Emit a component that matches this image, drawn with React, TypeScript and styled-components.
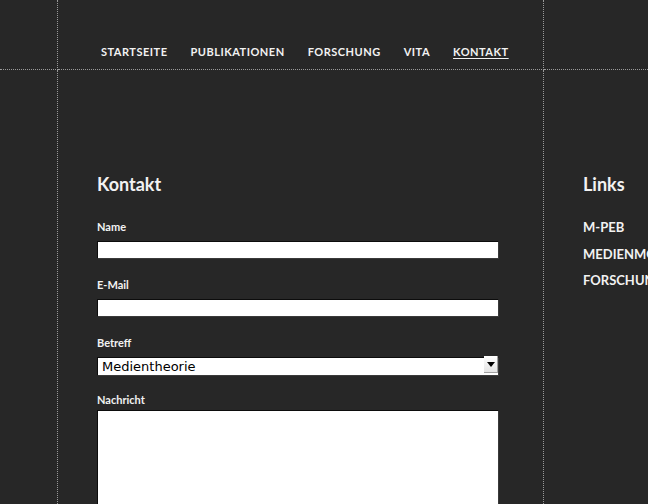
import React from "react";
import styled, { createGlobalStyle } from "styled-components";

const GlobalStyle = createGlobalStyle`
  html, body {
    margin: 0;
    padding: 0;
    background: #272727;
    overflow: hidden;
  }
  body {
    font-family: Lato, "DejaVu Sans", Verdana, sans-serif;
    color: #f2f2f2;
  }
`;

const navItems = ["Startseite", "Publikationen", "Forschung", "Vita", "Kontakt"];
const links = ["M-PEB", "Medienmonitoring", "Forschungsnetz"];

const App = () => {
  return (
    <>
      <GlobalStyle />
      <Shell>
        <TopCell $rule />
        <TopCell $rule>
          <Nav>
            {navItems.map((item) => (
              <NavLink key={item} href="#" $active={item === "Kontakt"}>
                {item}
              </NavLink>
            ))}
          </Nav>
        </TopCell>
        <TopCell />

        <BodyCell $rule />
        <BodyCell $rule>
          <Main>
            <Heading>Kontakt</Heading>
            <Form>
              <Field>
                <Label>Name</Label>
                <TextInput type="text" />
              </Field>
              <Field>
                <Label>E-Mail</Label>
                <TextInput type="text" />
              </Field>
              <Field $gap={5}>
                <Label>Betreff</Label>
                <SelectWrap>
                  <Select defaultValue="Medientheorie">
                    <option>Medientheorie</option>
                    <option>Publikationen</option>
                    <option>Forschung</option>
                  </Select>
                  <SelectArrow>
                    <svg width="8" height="5" viewBox="0 0 8 5">
                      <path d="M0 0h8L4 5z" fill="#000" />
                    </svg>
                  </SelectArrow>
                </SelectWrap>
              </Field>
              <Field $gap={3}>
                <Label>Nachricht</Label>
                <Message />
              </Field>
            </Form>
          </Main>
        </BodyCell>
        <BodyCell>
          <Sidebar>
            <Heading>Links</Heading>
            <LinkList>
              {links.map((l) => (
                <li key={l}>
                  <SideLink href="#">{l}</SideLink>
                </li>
              ))}
            </LinkList>
          </Sidebar>
        </BodyCell>
      </Shell>
    </>
  );
};

const Shell = styled.div`
  display: grid;
  grid-template-columns: 58px 486px 1fr;
  grid-template-rows: 70px 1fr;
  height: 100vh;
  width: 100vw;
  overflow: hidden;
`;

const TopCell = styled.div<{ $rule?: boolean }>`
  box-sizing: border-box;
  border-bottom: 1px dotted #9a9a9a;
  border-right: ${({ $rule }) => ($rule ? "1px dotted #9a9a9a" : "none")};
  min-width: 0;
`;

const BodyCell = styled.div<{ $rule?: boolean }>`
  box-sizing: border-box;
  border-right: ${({ $rule }) => ($rule ? "1px dotted #9a9a9a" : "none")};
  min-width: 0;
  overflow: hidden;
`;

const Nav = styled.nav`
  display: flex;
  gap: 23px;
  padding: 45px 0 0 43px;
`;

const NavLink = styled.a<{ $active?: boolean }>`
  font-size: 11px;
  line-height: 14px;
  font-weight: bold;
  letter-spacing: 0.5px;
  text-transform: uppercase;
  color: #f2f2f2;
  text-decoration: ${({ $active }) => ($active ? "underline" : "none")};
  text-underline-offset: 2px;
  white-space: nowrap;
`;

const Main = styled.div`
  padding: 103px 0 0 39px;
`;

const Heading = styled.h2`
  margin: 0;
  font-size: 18px;
  line-height: 22px;
  font-weight: bold;
  color: #f2f2f2;
`;

const Form = styled.form`
  display: flex;
  flex-direction: column;
  gap: 19px;
  margin-top: 25px;
  width: 402px;
`;

const Field = styled.div<{ $gap?: number }>`
  display: flex;
  flex-direction: column;
  gap: ${({ $gap = 7 }) => `${$gap}px`};
`;

const Label = styled.label`
  font-size: 11px;
  line-height: 14px;
  font-weight: bold;
  color: #f2f2f2;
`;

const TextInput = styled.input`
  box-sizing: border-box;
  width: 402px;
  height: 18px;
  margin: 0;
  padding: 0 3px;
  border: 1px solid #0c0c0c;
  border-right-color: #3a3a3a;
  border-bottom-color: #3a3a3a;
  background: #fff;
  outline: none;
`;

const SelectWrap = styled.div`
  position: relative;
  width: 402px;
  height: 19px;
`;

const Select = styled.select`
  box-sizing: border-box;
  appearance: none;
  width: 100%;
  height: 19px;
  margin: 0;
  padding: 0 0 0 4px;
  border: 1px solid #0c0c0c;
  border-right-color: #3a3a3a;
  border-bottom-color: #3a3a3a;
  border-radius: 0;
  background: #fff;
  color: #000;
  font-family: "DejaVu Sans", Verdana, sans-serif;
  font-size: 13px;
  line-height: 17px;
  outline: none;
`;

const SelectArrow = styled.span`
  position: absolute;
  top: 1px;
  right: 1px;
  bottom: 1px;
  width: 14px;
  display: flex;
  align-items: center;
  justify-content: center;
  background: linear-gradient(#ffffff, #e2e2e2);
  box-shadow: inset -1px -1px 0 #a0a0a0;
  pointer-events: none;
`;

const Message = styled.textarea`
  box-sizing: border-box;
  width: 402px;
  height: 140px;
  margin: 0;
  border: 1px solid #0c0c0c;
  border-right-color: #3a3a3a;
  background: #fff;
  resize: none;
  outline: none;
`;

const Sidebar = styled.aside`
  padding: 103px 0 0 39px;
  white-space: nowrap;
`;

const LinkList = styled.ul`
  list-style: none;
  margin: 19px 0 0;
  padding: 0;
`;

const SideLink = styled.a`
  display: block;
  font-size: 13px;
  line-height: 26.5px;
  font-weight: bold;
  text-transform: uppercase;
  color: #f2f2f2;
  text-decoration: none;
`;

export default App;
